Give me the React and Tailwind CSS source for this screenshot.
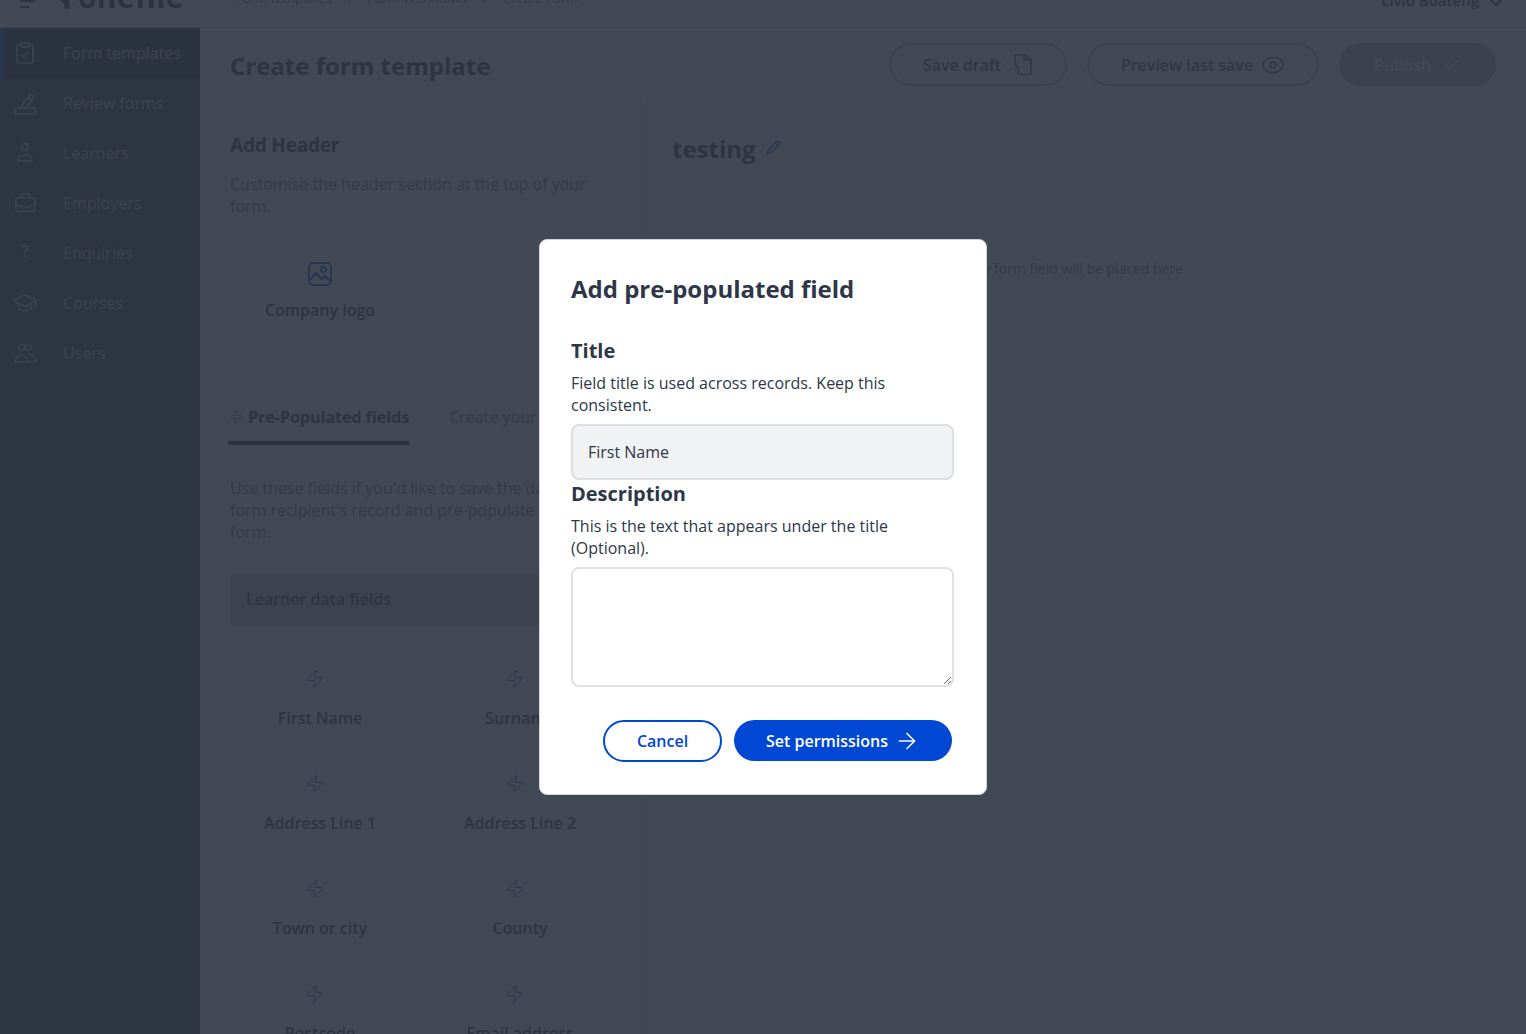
import React from 'react'
import { ArrowRight, Check, ChevronDown, ChevronRight, ClipboardCheck, GraduationCap, BriefcaseBusiness, Pencil, Zap } from 'lucide-react'

const font = { fontFamily: '"Open Sans", sans-serif' }

const navItems = [
  { label: 'Form templates', icon: <ClipboardCheck size={24} strokeWidth={1.6} />, active: true },
  { label: 'Review forms', icon: <ReviewIcon /> },
  { label: 'Learners', icon: <LearnerIcon /> },
  { label: 'Employers', icon: <BriefcaseBusiness size={23} strokeWidth={1.6} /> },
  { label: 'Enquiries', icon: <span className="text-[17px] font-semibold -mt-1">?</span> },
  { label: 'Courses', icon: <GraduationCap size={26} strokeWidth={1.5} /> },
  { label: 'Users', icon: <UsersIcon /> },
]

const fields = ['First Name', 'Surname', 'Address Line 1', 'Address Line 2', 'Town or city', 'County', 'Postcode', 'Email address']

export default function App() {
  return (
    <div className="relative h-screen overflow-hidden bg-white text-[#2d3748] [font-family:'Open_Sans',sans-serif]">
      <Header />
      <div className="flex h-[1006px]">
        <Sidebar />
        <main className="flex-1 flex flex-col min-w-0">
          <div className="flex items-center justify-between h-[73px] pl-[30px] pr-[30px] shrink-0">
            <h1 className="text-2xl font-bold mt-[2px]">Create form template</h1>
            <div className="flex items-center gap-5">
              <OutlineButton className="w-[178px] gap-[11px]">Save draft <FileIcon /></OutlineButton>
              <OutlineButton className="w-[232px] gap-[8px]">Preview last save <EyeIcon /></OutlineButton>
              <button className="flex items-center justify-center gap-3 w-[157px] h-[43px] rounded-full bg-[#b8bcc4] text-white font-semibold">
                Publish <Check size={18} />
              </button>
            </div>
          </div>
          <div className="flex flex-1 min-h-0">
            <LeftPanel />
            <div className="flex-1 border-l border-gray-300 pl-[31px] pt-[32px]">
              <div className="flex items-center gap-[10px]">
                <h2 className="text-2xl font-bold">testing</h2>
                <Pencil size={15} strokeWidth={2.2} className="text-[#0047d4] -mt-1" />
              </div>
              <p className="text-sm text-gray-500 mt-[94px] pl-[294px]">Any form field will be placed here</p>
            </div>
          </div>
        </main>
      </div>

      {/* dim layer over the page */}
      <div className="absolute inset-0 bg-[#2e3441]/90" />

      <div className="absolute inset-0 flex items-center justify-center">
        <Modal />
      </div>
    </div>
  )
}

function Header() {
  return (
    <header className="flex h-7 overflow-hidden border-b border-gray-300 bg-white">
      <div className="flex items-start -mt-[12px] w-full">
        <div className="flex flex-col gap-[4px] ml-[20px] mt-[6px] w-[15px]">
          <span className="h-[2px] w-[15px] bg-[#2d3748]" />
          <span className="h-[2px] w-[15px] bg-[#2d3748]" />
          <span className="h-[2px] w-[9px] bg-[#2d3748]" />
        </div>
        <svg width="20" height="22" viewBox="0 0 20 22" className="ml-[19px] text-[#1f2a44]">
          <path d="M2 10 L14 3 L16 20 L11 21 L9 14 Z" fill="currentColor" />
        </svg>
        <span className="ml-[4px] text-[30px] leading-[30px] font-bold text-[#1f2a44] -mt-[6px] tracking-[0.3px]">onefile</span>
        <nav className="flex items-center gap-[11px] ml-[52px] text-[13px] text-gray-500 mt-[1px]">
          <span>Form templates</span>
          <ChevronRight size={14} />
          <span>Form Workflows</span>
          <ChevronRight size={14} />
          <span>Create Form</span>
        </nav>
        <div className="ml-auto mr-[18px] flex items-center gap-[5px] font-semibold text-[15px] -mt-[1px]">
          Livio Boateng <ChevronDown size={24} strokeWidth={2} className="mt-[3px]" />
        </div>
      </div>
    </header>
  )
}

function Sidebar() {
  return (
    <aside className="w-[200px] shrink-0 bg-[#2d3748] text-[#c4ccd8]">
      {navItems.map(item => (
        <div key={item.label} className={`flex items-center h-[50px] border-l-[3px] ${item.active ? 'border-[#0047d4] bg-[#1f2937]' : 'border-transparent'}`}>
          <span className="w-[44px] flex justify-center shrink-0">{item.icon}</span>
          <span className="ml-[16px] whitespace-nowrap">{item.label}</span>
        </div>
      ))}
    </aside>
  )
}

function LeftPanel() {
  return (
    <section className="w-[440px] shrink-0 pl-[30px] pr-[28px] pt-[29px] overflow-hidden">
      <h2 className="text-[19px] font-bold leading-[30px] tracking-[-0.2px]">Add Header</h2>
      <p className="mt-[13px] leading-[22px] text-gray-500 w-[370px]">Customise the header section at the top of your form.</p>
      <div className="grid grid-cols-2 w-[400px] -ml-[10px] mt-[44px] h-[105px]">
        <div className="flex flex-col items-center">
          <ImageIcon />
          <span className="mt-[11px] font-semibold">Company logo</span>
        </div>
      </div>
      <div className="flex mt-[31px] -ml-[2px] whitespace-nowrap">
        <div className="flex items-center gap-[4px] h-[48px] border-b-4 border-[#1f2937] pb-[5px] font-bold">
          <Zap size={16} strokeWidth={1.2} className="text-gray-500" /> Pre-Populated fields
        </div>
        <div className="ml-[40px] h-[48px] flex items-center border-b-4 border-transparent pb-[5px] text-gray-500">Create your own fields</div>
      </div>
      <p className="mt-[32px] leading-[22px] text-gray-500 whitespace-nowrap">
        Use these fields if you'd like to save the data to the<br />
        form recipient's record and pre-populate it on this<br />
        form.
      </p>
      <div className="flex items-center mt-[31px] h-[52px] pb-[2px] rounded bg-[#c4c8ce] pl-4 font-semibold">Learner data fields</div>
      <div className="grid grid-cols-2 w-[400px] -ml-[10px] mt-[43px]">
        {fields.map(f => (
          <div key={f} className="flex flex-col items-center h-[105px]">
            <Zap size={20} strokeWidth={1.1} className="text-[#0047d4] -ml-[10px]" />
            <span className="mt-[17px] font-semibold">{f}</span>
          </div>
        ))}
      </div>
    </section>
  )
}

function Modal() {
  return (
    <div className="w-[448px] h-[556px] bg-white rounded-lg border border-gray-300 px-[31px] pt-[32px] text-[#2d3748]" style={font}>
      <h2 className="text-2xl font-bold leading-[34px]">Add pre-populated field</h2>
      <h3 className="mt-[31px] text-xl font-bold leading-[28px]">Title</h3>
      <p className="mt-[7px] leading-[22px]">Field title is used across records. Keep this consistent.</p>
      <input readOnly value="First Name" className="block mt-2 w-[383px] h-[56px] rounded-lg border-2 border-[#dcdee2] bg-[#f1f2f4] px-[15px] outline-none" />
      <h3 className="text-xl font-bold leading-[28px]">Description</h3>
      <p className="mt-[7px] leading-[22px]">This is the text that appears under the title (Optional).</p>
      <textarea readOnly className="block mt-2 w-[383px] h-[120px] rounded-lg border-2 border-[#e0e1e4] bg-white outline-none" />
      <div className="flex justify-end gap-3 mt-[33px] pr-[3px]">
        <button className="w-[119px] h-[42px] rounded-full border-2 border-[#0047d4] text-[#0047d4] font-semibold">Cancel</button>
        <button className="flex items-center justify-center gap-[6px] w-[218px] h-[41px] rounded-full bg-[#0047d4] text-white font-semibold">
          Set permissions <ArrowRight size={26} strokeWidth={1.4} />
        </button>
      </div>
    </div>
  )
}

function OutlineButton({ className, children }) {
  return (
    <button className={`flex items-center justify-center h-[43px] rounded-full border-2 border-[#b8bcc4] font-semibold text-[#4b5563] ${className}`}>
      {children}
    </button>
  )
}

function ReviewIcon() {
  return (
    <svg width="26" height="26" viewBox="0 0 26 26" fill="none" stroke="currentColor" strokeWidth="1.6" strokeLinejoin="round">
      <path d="M3 24 V18 H23 V24 Z" />
      <path d="M8 18 L18 4 L22 7 L14 18" />
      <path d="M16 7 L20 10" />
    </svg>
  )
}

function LearnerIcon() {
  return (
    <svg width="22" height="24" viewBox="0 0 22 24" fill="none" stroke="currentColor" strokeWidth="1.6">
      <circle cx="11" cy="6" r="3.2" />
      <path d="M4 20 C4 12 18 12 18 20 Z" strokeLinejoin="round" />
    </svg>
  )
}

function UsersIcon() {
  return (
    <svg width="26" height="24" viewBox="0 0 26 24" fill="none" stroke="currentColor" strokeWidth="1.5">
      <circle cx="9.5" cy="6.5" r="3" />
      <circle cx="16" cy="6.5" r="3" />
      <path d="M3 21 C3 12 16 12 16 21 Z" strokeLinejoin="round" />
      <path d="M16 13 C21 13 24 16 24 21 H16" strokeLinejoin="round" />
    </svg>
  )
}

function ImageIcon() {
  return (
    <svg width="26" height="26" viewBox="0 0 26 26" fill="none" stroke="#0047d4" strokeWidth="2" strokeLinejoin="round">
      <rect x="2" y="2" width="22" height="22" rx="4" />
      <circle cx="16.5" cy="8.5" r="2.5" />
      <path d="M3 19 L9 12 L15 18 L18 15 L23 20" />
    </svg>
  )
}

function FileIcon() {
  return (
    <svg width="21" height="23" viewBox="0 0 21 23" fill="none" stroke="currentColor" strokeWidth="1.6" strokeLinejoin="round">
      <path d="M3 2 H12 L19 7 V20 Q19 21.5 17 21.5 H8 Q6 21.5 6 20 V15" />
      <path d="M3 2 V11 L6 15" />
      <path d="M12 2 V7 H19" />
    </svg>
  )
}

function EyeIcon() {
  return (
    <svg width="24" height="20" viewBox="0 0 24 20" fill="none" stroke="currentColor" strokeWidth="1.6">
      <ellipse cx="12" cy="10" rx="10" ry="7.5" />
      <circle cx="12" cy="10" r="3" />
    </svg>
  )
}
